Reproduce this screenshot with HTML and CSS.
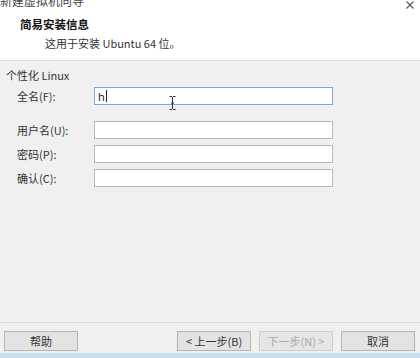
FILE: index.html
```html
<!DOCTYPE html>
<html>
<head>
  <meta charset="utf-8" />
  <title>新建虚拟机向导</title>
  <link rel="stylesheet" href="styles.css">
</head>
<body>
  <div class="wizard">
    <div class="wizard-head">
      <div class="wizard-titlebar">
        <span class="wizard-title">新建虚拟机向导</span>
        <svg class="wizard-close" width="8" height="8" viewBox="0 0 8 8">
          <path d="M0.5 0.5L7.5 7.5M7.5 0.5L0.5 7.5" stroke="#555" stroke-width="1.1" fill="none"/>
        </svg>
      </div>
      <div class="wizard-heading">简易安装信息</div>
      <div class="wizard-sub">这用于安装 Ubuntu 64 位。</div>
    </div>

    <div class="wizard-body">
      <div class="group-title">个性化 Linux</div>
      <div class="field field-first">
        <label>全名(F):</label>
        <div class="input input-focus"><span class="typed">h</span><span class="caret"></span></div>
        <svg class="ibeam" width="7" height="14" viewBox="0 0 7 14">
          <path d="M0.5 0.5h2.5M4 0.5h2.5M3.5 1v12M0.5 13.5h2.5M4 13.5h2.5M2 7h3" stroke="#333" fill="none" stroke-width="1"/>
        </svg>
      </div>
      <div class="field field-gap">
        <label>用户名(U):</label>
        <div class="input"></div>
      </div>
      <div class="field">
        <label>密码(P):</label>
        <div class="input"></div>
      </div>
      <div class="field">
        <label>确认(C):</label>
        <div class="input"></div>
      </div>
    </div>

    <div class="wizard-foot">
      <button class="btn">帮助</button>
      <div class="btn-spacer"></div>
      <button class="btn">&lt; 上一步(B)</button>
      <button class="btn" disabled>下一步(N) &gt;</button>
      <button class="btn">取消</button>
    </div>
    <div class="taskbar-edge"></div>
  </div>
</body>
</html>
```

FILE: styles.css
```css
html, body {
  margin: 0;
  padding: 0;
}

body {
  width: 420px;
  height: 358px;
  overflow: hidden;
  background-color: #f0f0f0;
  color: #222;
  font-family: "Microsoft YaHei", "Noto Sans CJK SC", "Noto Sans", sans-serif;
  font-size: 11px;
}

.wizard {
  display: flex;
  flex-direction: column;
  height: 358px;
}

.wizard-head {
  background-color: #fff;
  height: 60px;
  border-bottom: 1px solid #dcdcdc;
}

.wizard-titlebar {
  height: 8px;
  position: relative;
}

.wizard-title {
  position: absolute;
  left: 0;
  top: -7px;
  font-size: 12px;
  line-height: 16px;
  color: #444;
}

.wizard-close {
  position: absolute;
  right: 6px;
  top: 1px;
}

.wizard-heading {
  margin: 8px 0 0 20px;
  font-weight: bold;
  font-size: 11.5px;
  line-height: 16px;
  color: #111;
}

.wizard-sub {
  margin: 3px 0 0 45px;
  line-height: 16px;
  color: #333;
}

.wizard-body {
  flex: 1;
  padding: 6px 0 0 6px;
}

.group-title {
  line-height: 16px;
  color: #333;
}

.field {
  display: flex;
  align-items: center;
  height: 18px;
  margin-top: 6px;
  position: relative;
}

.field-first {
  margin-top: 4px;
}

.field-gap {
  margin-top: 16px;
}

.field label {
  width: 88px;
  padding-left: 11px;
  box-sizing: border-box;
  color: #333;
}

.input {
  width: 239px;
  height: 18px;
  box-sizing: border-box;
  background-color: #fff;
  border: 1px solid #b8b8b8;
  display: flex;
  align-items: center;
  padding-left: 3px;
}

.input-focus {
  border-color: #7aa7dc;
}

.typed {
  font-family: "Noto Sans", sans-serif;
  font-size: 11px;
  color: #222;
}

.caret {
  width: 1px;
  height: 12px;
  background-color: #222;
  margin-left: 1px;
}

.ibeam {
  position: absolute;
  left: 163px;
  top: 9px;
}

.wizard-foot {
  border-top: 1px solid #dcdcdc;
  display: flex;
  gap: 8px;
  padding: 8px 5px 0 4px;
  height: 22px;
}

.btn-spacer {
  flex: 1;
}

.btn {
  width: 74px;
  height: 20px;
  background-color: #e3e3e3;
  border: 1px solid #b5b5b5;
  font-family: inherit;
  font-size: 11px;
  color: #333;
  padding: 0;
}

.btn:disabled {
  color: #a8a8a8;
  border-color: #cfcfcf;
  background-color: #e6e6e6;
}

.taskbar-edge {
  height: 5px;
  background-color: #c9dcef;
}
```
